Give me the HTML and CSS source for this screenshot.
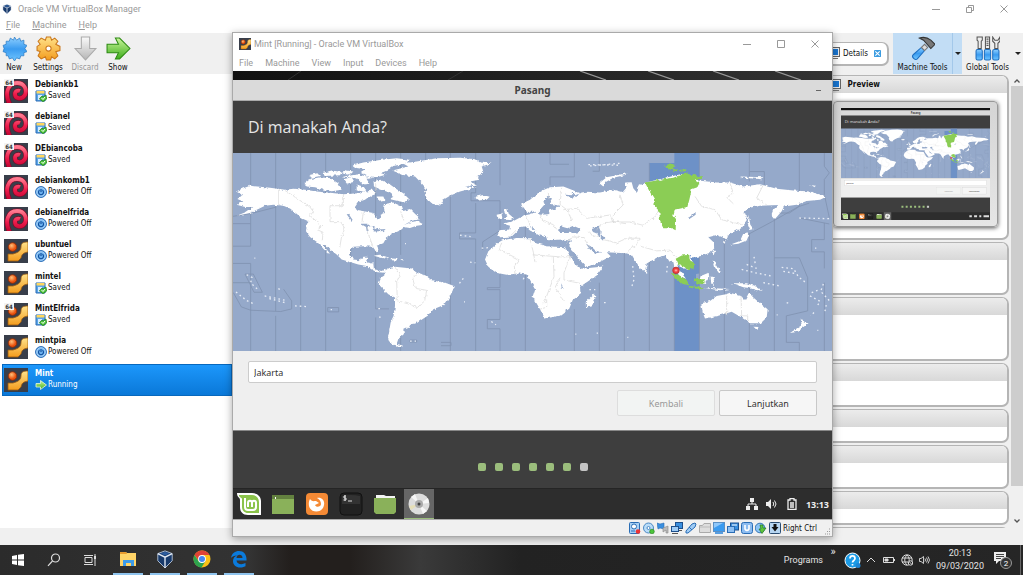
FILE: index.html
```html
<!DOCTYPE html>
<html lang="id">
<head>
<meta charset="utf-8">
<title>Oracle VM VirtualBox Manager</title>
<link rel="stylesheet" href="styles.css">
</head>
<body>
<svg class="defs" aria-hidden="true">
  <defs>
    <linearGradient id="red" x1="0" y1="0" x2="0" y2="1"><stop offset="0" stop-color="#ff7a90"/><stop offset=".5" stop-color="#ee1c4b"/><stop offset="1" stop-color="#b8002e"/></linearGradient>
    <linearGradient id="gold" x1="0" y1="0" x2="0" y2="1"><stop offset="0" stop-color="#ffe28a"/><stop offset="1" stop-color="#f39c1d"/></linearGradient>
    <linearGradient id="blue" x1="0" y1="0" x2="0" y2="1"><stop offset="0" stop-color="#8fd0ff"/><stop offset=".5" stop-color="#3a9bf0"/><stop offset="1" stop-color="#6fc6ff"/></linearGradient>
    <linearGradient id="green" x1="0" y1="0" x2="0" y2="1"><stop offset="0" stop-color="#c9f59a"/><stop offset="1" stop-color="#3fae1c"/></linearGradient>
    <linearGradient id="grey" x1="0" y1="0" x2="0" y2="1"><stop offset="0" stop-color="#fafafa"/><stop offset="1" stop-color="#b5b5b5"/></linearGradient>
    <radialGradient id="ball" cx=".4" cy=".35"><stop offset="0" stop-color="#ffc07a"/><stop offset="1" stop-color="#e8500c"/></radialGradient>
    <filter id="coast" x="0" y="0" width="1" height="1"><feTurbulence type="fractalNoise" baseFrequency=".09" numOctaves="3" seed="4"/><feDisplacementMap in="SourceGraphic" scale="10" xChannelSelector="R" yChannelSelector="G"/></filter>
  </defs>

  <symbol id="debian" viewBox="0 0 24 24">
    <rect width="24" height="24" fill="#383e4a"/>
    <path d="M6 26C0 14 4 4 13 4c8 0 10 7 8 12-3 5-10 4-10-1 0-3 3-4 5-3" fill="none" stroke="#7d0a26" stroke-width="5"/>
    <path d="M6 26C0 14 4 4 13 4c8 0 10 7 8 12-3 5-10 4-10-1 0-3 3-4 5-3" fill="none" stroke="url(#red)" stroke-width="3.800"/>
  </symbol>
  <symbol id="ubuntu" viewBox="0 0 24 24">
    <rect width="24" height="24" fill="#383e4a"/>
    <path d="M24 3c-5 0-7 1-7 5 0 3-2 5-5 6l-3 1H4v7h10l3-3c1-4 2-5 7-6z" fill="url(#gold)" stroke="#9c5a10" stroke-width=".8"/>
    <circle cx="8.500" cy="8" r="4.300" fill="url(#ball)" stroke="#8a2a05" stroke-width=".8"/>
  </symbol>
  <symbol id="saved" viewBox="0 0 12 12">
    <path d="M1 1h9v10H1z" fill="#5ba6e8" stroke="#2a6db5"/><path d="M1.500 1h8v2.500h-8z" fill="#ffd75e"/><path d="M3 5h4v5H3z" fill="#d9ecfd"/>
    <path d="M5 8l2-2 1 1 3-2 .7 4L8 11.700 4.500 9z" fill="#4cc53a" stroke="#217a1a" stroke-width=".7"/><path d="M6.500 8L8 9.500 10 7" stroke="#fff" fill="none" stroke-width="1"/>
  </symbol>
  <symbol id="off" viewBox="0 0 12 12">
    <circle cx="6" cy="6" r="5.400" fill="#6ab0ef" stroke="#2166b3"/><circle cx="6" cy="6" r="4.200" fill="none" stroke="#cfe7fc" stroke-width=".7"/>
    <path d="M4.500 4.200a2.500 2.500 0 1 0 3 0M6 3v3" fill="none" stroke="#0f4d9a" stroke-width="1.100"/>
  </symbol>
  <symbol id="run" viewBox="0 0 12 12"><path d="M1 4.500h4.500V1.500l6 4.500-6 4.500V8H1z" fill="url(#green)" stroke="#e4f7d8" stroke-width=".8"/></symbol>
  <symbol id="monitor" viewBox="0 0 12 12"><rect x=".5" y=".5" width="11" height="9" fill="#eee" stroke="#666"/><rect x="2" y="2" width="8" height="6" fill="#1976d2"/><path d="M2 11.500h8" stroke="#777"/></symbol>

  <symbol id="map" viewBox="9 9 1797 597" preserveAspectRatio="none">
    <rect x="0" y="0" width="1810" height="620" fill="#95a9ca"/>
    <path d="M1258 39h75V9h75v75l-6 20v-8l6 234v42l-10 2v18h10v214h-75V330l-75-230z" fill="#6d91c7"/>
    <g fill="none" stroke="#8092b0" stroke-width="2.500">
      <path d="M62 9v213M9 222h53v68H9M9 342h53v58H9M62 400v206M137 9v477M137 500v106M212 9v597M287 9v597M362 9v597M437 9v470h40M437 505v101M512 9v307M512 400v206M587 9v597M661 9v597M737 9v120h-14v24h87v90l-52 34v24M737 160v90h-48v18h48v338M810 9v97M810 290v125h-38v6h38v90h-38v28h38v67M886 9v597"/>
      <path d="M9 200l60-10 70-18M45 374h25l27 55H72zM10 430l24 43 28 10 90 4 33-8v-24l-24-35M293 475h33v13h-33zM633 580h30v10h-30M540 573h20v6h-20z"/>
      <path d="M960 9v34h57M1033 9v72h-73v25M1108 9v55h-20M1033 480v126M1108 400v206M1183 300v306M1258 39v60M1258 300v306M1333 375v231M1408 9v597M1483 260v346M1558 65v30M1558 9v56h45v40M1633 520v86M1558 250v356M1633 200v320M1708 9v160l-80 46-80 43M1633 190h45l30-20 30-10M1783 9v40l15 20-15 20v45l15 70M1708 205l90 18M1783 220v50h-38v37h38v50M1633 325h75l25 60v100l-64 15v80h39v26M1783 400v206"/>
    </g>
    <g fill="#fff" filter="url(#coast)">
      <path d="M18 125L38 116 60 108 90 111 120 114 165 120 190 117 225 120 260 125 300 129 340 133 385 130 400 124 414 128 425 116 436 133 418 140 405 150 385 157 375 172 380 181 402 185 430 190 440 205 453 208 452 195 465 190 462 175 465 163 490 158 515 170 520 184 540 178 558 195 573 208 545 213 522 226 545 217 562 214 582 225 560 228 540 235 520 232 505 245 485 253 468 267 460 281 440 289 447 305 440 308 428 292 400 290 370 292 360 300 360 315 370 330 390 332 400 322 412 322 408 338 430 343 432 360 455 365 468 358 462 370 440 368 425 360 410 350 385 345 360 338 335 330 320 315 300 300 285 286 278 285 300 313 290 309 275 292 262 278 240 262 228 245 230 225 235 215 215 206 200 192 180 176 160 168 130 165 105 168 85 178 60 190 20 198 50 186 70 172 45 172 20 165 40 155 22 148 38 136z"/>
      <path d="M430 95L450 90 475 100 500 118 520 130 537 148 525 158 500 153 478 148 492 140 478 128 450 118 432 110zM368 46L400 38 450 30 500 25 543 30 520 42 490 48 472 62 450 70 470 74 440 82 410 78 390 68 405 58 380 54zM224 100L240 88 270 82 300 85 325 100 335 120 305 124 280 120 255 112 230 110zM235 76L262 70 270 78 245 84zM275 70l30-8 30 4-5 10-45 2zM340 60l30 5-10 10-25-4zM340 88l25-6 8 14-22 6zM378 82l30 2 10 18-20 2zM380 104l18 6 12 16-30-4zM440 140l20 0 6 14-20 2zM338 80l44-6 50 10-30 4z"/>
      <path d="M487 62L535 50 518 40 560 35 620 25 690 23 738 28 750 38 785 40 755 50 760 65 740 80 748 90 720 95 738 104 705 110 740 112 690 125 660 138 640 150 630 167 607 162 590 146 584 130 592 120 575 100 555 80 520 75zM733 142L760 136 779 141 770 150 745 152z"/>
      <path d="M463 364L480 355 495 352 545 357 560 370 587 378 605 393 650 402 674 411 666 428 655 450 645 466 610 480 600 495 577 510 560 522 540 525 535 535 520 542 522 555 505 570 500 584 520 590 500 593 480 582 474 565 482 520 490 505 495 470 495 445 475 435 460 420 443 402 450 387 463 378zM428 318L450 316 478 325 465 328zM482 327l22 1-5 5-16-1zM512 329l10 0 0 3-9 0z"/>
      <path d="M765 330L775 305 803 280 817 272 860 265 900 266 920 282 950 290 1005 293 1020 320 1035 345 1055 358 1120 351 1100 378 1050 412 1052 436 1028 452 1018 478 990 500 945 508 930 480 908 442 915 420 902 398 890 375 865 372 830 376 798 370 775 352zM1067 458L1092 433 1099 440 1085 472 1068 475z"/>
      <path d="M805 242L838 240 840 228 820 222 852 213 880 198 900 194 918 188 930 195 960 193 955 182 975 178 990 168 960 172 935 190 920 190 905 182 898 190 880 180 874 163 900 150 930 125 960 112 1000 110 1052 130 1034 137 1008 135 1018 145 1035 142 1055 128 1070 126 1110 128 1150 120 1178 127 1190 112 1186 98 1205 97 1210 115 1222 130 1226 108 1248 98 1300 85 1355 72 1400 80 1405 92 1460 98 1500 98 1540 110 1590 103 1640 117 1690 122 1740 125 1790 140 1770 150 1730 154 1700 165 1662 170 1655 185 1635 208 1624 195 1630 180 1645 166 1590 168 1555 175 1540 190 1550 197 1550 215 1535 235 1512 248 1494 255 1490 270 1476 262 1460 256 1435 263 1450 277 1453 296 1440 310 1410 320 1390 325 1378 318 1392 345 1375 362 1350 352 1342 345 1345 358 1368 388 1348 380 1334 356 1330 338 1315 336 1305 318 1280 325 1250 342 1246 360 1235 363 1215 332 1205 316 1188 311 1130 308 1142 320 1095 345 1067 351 1052 335 1018 290 1022 274 1000 270 955 272 946 262 932 255 915 238 900 230 893 226 908 238 940 250 925 257 900 243 886 230 870 233 862 245 842 264 815 266 805 258z"/>
      <path d="M822 178l10 0 4 14 16 14-10 5-20-1 10-10-8-10zM800 195l14-3 3 12-15 4zM1108 100L1130 82 1190 70 1192 74 1150 84 1125 98 1120 110zM1530 80l70 2-5 6-55-4zM1740 106l18 2-6 4zM1556 195l5 30 10 14-10 2-8-20zM1540 252l10-4 6 10-6 15-25 10-25 3 30-12zM1480 270l6 10-6 3z"/>
      <path d="M1245 358l8 8-4 8-5-8zM1449 300l6 5-4 12-5-5zM1448 332l10 10 14 24-6 4-14-20zM1412 380l24-10 2 14-14 20-18-4zM1442 382l14 0-8 10 4 18-8-4zM1505 402l20 0 25 0 30 10 18 12-20-2-20-6-18-2-20-8zM1420 415l80 4-30 4z"/>
      <path d="M1414 462L1440 455 1460 440 1488 435 1500 430 1533 440 1545 452 1557 430 1570 445 1590 462 1613 480 1610 505 1592 522 1560 522 1535 505 1505 488 1465 500 1425 508 1418 490zM1570 533l16 1-6 8zM1712 508L1722 520 1736 522 1718 535 1705 548 1680 552 1700 538 1715 528z"/>
    </g>
    <g fill="none" stroke="#e8edf6" stroke-width="4" stroke-dasharray="5 9">
      <path d="M50 376l16 8-4 16 12 12 14 12M18 428l32 26 26 12M104 440l66 14M118 448l54 14M145 418l10 5M195 470l34 2M690 257l32 4M720 338l16 2M755 296l24-2M302 481h4M445 478l10 0M447 504l8 0M540 576l18 0M784 517l14 10M525 282h3M700 387l-14 18M702 458h3M73 326h3M880 390l2-6"/>
      <path d="M1075 44l96 2M1080 48l92-8M1208 350l4 40-6 20M1312 350l-2 20M1572 322l4 22M1655 354l36 4 14 24 20 16M1660 366l34 6M1600 400l50 10M1535 360l40 10 50 10M1708 205l90 2M1740 440l30 16-8 14M1780 404l-8 22 26 28M1745 430l26-10M1752 490l-10 10M1755 296h4M1670 460l10 4M1078 421h18M1122 460h12M1100 552h4M1036 555h3M1192 565h3M1640 497h3M1762 544h3M1785 486l4-20M1550 345l30 12"/>
    </g>
    <g fill="#95a9ca" filter="url(#coast)">
      <path d="M925 185L943 165 940 152 955 140 966 146 957 162 990 168 988 174 962 174 952 194 930 193zM985 240L992 230 1012 236 1030 228 1052 238 1048 248 1010 250 990 250zM1083 236L1105 228 1112 245 1110 258 1128 264 1118 273 1108 262 1100 250 1088 246zM1068 283L1082 290 1098 304 1115 308 1098 311 1080 300zM350 194l6-1 12 18-4 2zM392 222l20 0 10 8-10 2 4 14-6-2-2-12zM425 230l22 10 20-2-6 6-30 2zM1375 205l22-18 0 8-20 14zM993 405l8 14-6-2zM1025 128l12 6-10 4zM900 244l26 12 24 8-10 10-20-2-22-10z"/>
    </g>
    <g fill="none" stroke="#d4d4d4" stroke-width="2" filter="url(#coast)">
      <path d="M145 116v50M165 122l75 50 10 14-10 12 35 30-14 12 18 8-2 24M340 133v35h-40v48h32l12 20-10 30-6 34M400 188l-4 30M412 232l6 30 10 26M437 100v30M512 185l10 28M495 353l15 28-10 14 2 60 30 8 30 12 22-20 6-32-34-6-8-30 12-14M815 280l-8 20 60 30-14 20 2 26M900 268l10 40 5 30M908 316l80 6 40 0M970 322l2 60-30 80M930 480l20-6 0-24M1020 320l-18 50 0 22 48 10M990 385l-15 30 28 40M838 262l20-20M890 200l10 25M930 195l10 20 30 10 10 14M955 128l2 20M995 114l-5 50 25 20 10 30M1000 180l40-4 30 30 70-10 8 20 40 6M1170 135l10 30-30 30 0 22 50 0 40 10 40-30 10-30 10 0M1100 240l20-20 30-4M1120 270l40 10 30-14 40 0-10 20-30 20M1230 290l50 14 40-2 20 20M1395 140l20 30 40 10 20 30 60 15M1500 100l10 30-20 12 20 20M1600 105l-20 40 30 20M1490 435v60M1533 440l2 60h18v22M1010 280l15-18 35 2 20 30M1108 260l-20 0-10-14"/>
    </g>
    <g fill="#8bcd55" filter="url(#coast)">
      <path d="M1245 98L1300 88 1330 84 1355 74 1365 68 1380 74 1418 80 1412 86 1395 92 1408 100 1402 112 1385 118 1378 150 1372 172 1335 180 1330 198 1338 208 1337 242 1325 236 1300 236 1290 215 1288 185 1270 165 1272 148 1255 118zM1303 48l18-7 15 4-8 10 18 8-12 1-22-8zM1346 60l22-2 4 5-20 2zM1337 328L1355 318 1377 316 1380 332 1392 340 1392 354 1375 362 1362 352 1344 346zM1322 370L1345 376 1370 392 1378 408 1358 404 1335 386zM1376 410l44 4-2 6-40-5zM1392 384l16 6 14 0 2 12-20 2-12-10z"/>
    </g>
    <circle cx="1338" cy="363" r="10" fill="#ee3b3b" stroke="#a33" stroke-width="2"/><path d="M1334 360h8v6h-8z" fill="#ff9b9b"/>
  </symbol>

  <symbol id="mintlogo" viewBox="0 0 24 24"><path d="M0 1h15c6 0 9 4 9 8v14H11c-6 0-8-4-8-8V8C3 5 0 6 0 1z" fill="#fff"/><path d="M2 3h13c4 0 7 3 7 7v11H11c-4 0-6-3-6-6V7C5 5 2 6 2 3z" fill="#8bc34a"/><path d="M8 6v9c0 2 1 3 3 3h5c2 0 3-1 3-3v-4c0-3-4-3-4 0v4m0-4c0-3-4-3-4 0v4" fill="none" stroke="#fff" stroke-width="2"/></symbol>
  <symbol id="desk" viewBox="0 0 24 24"><path d="M1 3h22v19H1z" fill="#8ab15a"/><path d="M1 3h22v4H1z" fill="#63813f"/><path d="M4 5h1v2h-1z" fill="#fff"/></symbol>
  <symbol id="fox" viewBox="0 0 24 24"><rect x="1" y="1" width="22" height="22" rx="4" fill="#f58a35"/><path d="M5 7c2 3 4 2 6 2l3 2-4 2c1 3 6 2 6-1 0-3-2-5-4-6 5-1 8 3 7 7-1 8-13 9-15 1-.5-3 0-5 1-7z" fill="#fff"/></symbol>
  <symbol id="term" viewBox="0 0 24 24"><rect x="1" y="1" width="22" height="22" rx="4" fill="#222" stroke="#111"/><path d="M3 4q9-2 18 0v8H3z" fill="#333"/><path d="M7 4H5v2h2v2H4.500M6 3v6M9 9h4" stroke="#ddd" fill="none"/></symbol>
  <symbol id="files" viewBox="0 0 24 24"><path d="M3 3h8l2 1h9v5H3z" fill="#f4f4f4"/><path d="M1 6h22v14l-2 2H3l-2-2z" fill="#8ab15a"/></symbol>
  <symbol id="disc" viewBox="0 0 24 24"><circle cx="12" cy="12" r="10.500" fill="#ddd"/><path d="M12 12L4 5l4-3zM12 12l8 7-4 3zM12 12l9-6 1 5z" fill="#f7f7f7"/><path d="M12 12L2 14l2 4z" fill="#e6dfb8"/><circle cx="12" cy="12" r="4" fill="#aaa"/><circle cx="12" cy="12" r="1.500" fill="#444"/></symbol>
  <symbol id="vbox" viewBox="0 0 20 20"><path d="M10 1l8 3v8l-8 8-8-8V4z" fill="#183a6b" stroke="#b9c7da"/><path d="M2 4l8 4 8-4M10 8v12" stroke="#e4ebf5" stroke-width="1.500" fill="none"/><path d="M5 4l5-2 5 2-5 2z" fill="#2c5c9e"/></symbol>
</svg>

<div class="desktop">
  <main class="manager">
    <header class="titlebar">
      <svg class="appicon"><use href="#vbox"/></svg>
      <h1 class="title">Oracle VM VirtualBox Manager</h1>
      <div class="winbtns">
        <button aria-label="Minimize"><svg viewBox="0 0 10 10"><path d="M1 5.500h8"/></svg></button>
        <button aria-label="Restore"><svg viewBox="0 0 10 10"><path d="M1.500 3.500h5v5h-5zM3.500 3V1.500h5v5H7"/></svg></button>
        <button aria-label="Close"><svg viewBox="0 0 10 10"><path d="M1.500 1.500l7 7m0-7l-7 7"/></svg></button>
      </div>
    </header>
    <nav class="menubar"><button><u>F</u>ile</button><button><u>M</u>achine</button><button><u>H</u>elp</button></nav>

    <div class="toolbar">
      <button class="tool new"><svg viewBox="0 0 24 24"><path d="M12 1l2 3 3-2 1 3 3-1v4l3 1-2 3 2 3-3 1v3h-3l-1 3-3-1-2 3-2-3-3 1-1-3H4v-3l-3-1 1-3-1-3 3-1V5l3 0 1-3 3 2z" fill="url(#blue)" stroke="#2a79c4" stroke-width=".7"/></svg>New</button>
      <button class="tool settings"><svg viewBox="0 0 24 24"><path d="M10 1h4l1 3 3-2 3 3-2 3 4 2v4l-4 1 2 4-3 3-3-2-1 3h-4l-1-3-4 2-3-3 2-4-3-1v-4l3-2-2-3 3-3 4 2z" fill="url(#gold)" stroke="#c9761a"/><circle cx="12" cy="12" r="2.500" fill="#fff" stroke="#c9761a"/></svg>Settings</button>
      <button class="tool discard" disabled><svg viewBox="0 0 24 24"><path d="M8 1h8v11h6L12 23 2 12h6z" fill="url(#grey)" stroke="#aaa"/></svg>Discard</button>
      <button class="tool show"><svg viewBox="0 0 24 24"><path d="M1 8h11l-3-6h4l10 10-10 10H9l3-6H1z" fill="url(#green)" stroke="#2c8a12"/></svg>Show</button>
      <div class="toolgap"></div>
      <button class="tab"><svg class="tiny"><use href="#monitor"/></svg>Details<svg class="tabx" viewBox="0 0 8 8"><rect width="8" height="8" rx="1" fill="#3a9be0"/><path d="M1.500 1.500l5 5m0-5l-5 5" stroke="#fff" stroke-width="1.200"/></svg></button>
      <button class="tool machine"><svg viewBox="0 0 24 24"><path d="M3 18l8-7 3 3-7 8c-2 2-6-2-4-4z" fill="url(#blue)" stroke="#1f6fc0"/><path d="M11 11l3-3 3 3-3 3z" fill="#ddd" stroke="#777"/><path d="M9 2q6-2 11 2l4 4-4 4-7-8z" fill="#777" stroke="#333"/></svg>Machine Tools</button>
      <button class="drop hot" aria-label="Machine tools menu"><i></i></button>
      <button class="tool global"><svg viewBox="0 0 24 24"><path d="M2 1h5v3l-1 1v7H3V5L2 4zM10 1h4v11h-4zM17 1v4l2 2v5h3V7l2-2V1l-2 3h-3z" fill="#eee" stroke="#555"/><path d="M11 3h2M11 5h2M11 7h2M11 9h2" stroke="#555"/><rect x="1" y="13" width="6" height="10" rx="1.500" fill="url(#blue)" stroke="#1f6fc0"/><rect x="9" y="13" width="6" height="10" rx="1.500" fill="url(#blue)" stroke="#1f6fc0"/><rect x="17" y="13" width="6" height="10" rx="1.500" fill="url(#blue)" stroke="#1f6fc0"/></svg>Global Tools</button>
      <button class="drop" aria-label="Global tools menu"><i></i></button>
    </div>

    <div class="content">
      <ul class="vms">
        <li class="vm"><span class="os b64"><svg><use href="#debian"/></svg></span><div><b>Debiankb1</b><span><svg><use href="#saved"/></svg>Saved</span></div></li>
        <li class="vm"><span class="os b64"><svg><use href="#debian"/></svg></span><div><b>debianel</b><span><svg><use href="#saved"/></svg>Saved</span></div></li>
        <li class="vm"><span class="os b64"><svg><use href="#debian"/></svg></span><div><b>DEbiancoba</b><span><svg><use href="#saved"/></svg>Saved</span></div></li>
        <li class="vm"><span class="os"><svg><use href="#debian"/></svg></span><div><b>debiankomb1</b><span><svg><use href="#off"/></svg>Powered Off</span></div></li>
        <li class="vm"><span class="os"><svg><use href="#debian"/></svg></span><div><b>debianelfrida</b><span><svg><use href="#off"/></svg>Powered Off</span></div></li>
        <li class="vm"><span class="os"><svg><use href="#ubuntu"/></svg></span><div><b>ubuntuel</b><span><svg><use href="#off"/></svg>Powered Off</span></div></li>
        <li class="vm"><span class="os"><svg><use href="#ubuntu"/></svg></span><div><b>mintel</b><span><svg><use href="#saved"/></svg>Saved</span></div></li>
        <li class="vm"><span class="os b64"><svg><use href="#ubuntu"/></svg></span><div><b>MintElfrida</b><span><svg><use href="#saved"/></svg>Saved</span></div></li>
        <li class="vm"><span class="os"><svg><use href="#ubuntu"/></svg></span><div><b>mintpia</b><span><svg><use href="#off"/></svg>Powered Off</span></div></li>
        <li class="vm selected"><span class="os"><svg><use href="#ubuntu"/></svg></span><div><b>Mint</b><span><svg><use href="#run"/></svg>Running</span></div></li>
      </ul>
      <div class="details">
        <section class="panel preview">
          <h2><svg class="tiny"><use href="#monitor"/></svg>Preview</h2>
          <div class="screen">
            <svg viewBox="0 0 599 449" preserveAspectRatio="none">
              <rect width="599" height="449" fill="#3e3e3e"/><rect width="599" height="9" fill="#111"/><rect y="9" width="599" height="21" fill="#dadada"/>
              <text x="300" y="24" class="pv-title">Pasang</text><text x="15" y="62" class="pv-head">Di manakah Anda?</text>
              <use href="#map" x="0" y="82" width="599" height="199"/>
              <rect y="281" width="599" height="78" fill="#efefef"/><rect x="15" y="290" width="569" height="21" fill="#fff" stroke="#ccc"/>
              <rect x="384" y="320" width="97" height="25" fill="#f3f4f3" stroke="#ddd"/><rect x="487" y="320" width="97" height="25" fill="#f6f6f6" stroke="#ccc"/>
              <text x="21" y="305" class="pv-text">Jakarta</text><text x="433" y="337" class="pv-text mid dim">Kembali</text><text x="535" y="337" class="pv-text mid">Lanjutkan</text>
              <path d="M243 396h104" stroke="#9cbf7d" stroke-width="8" stroke-dasharray="8 9"/><rect x="346" y="392" width="8" height="8" fill="#ccc"/>
              <rect y="418" width="599" height="31" fill="#2d2d2d"/>
              <use href="#mintlogo" x="4" y="422" width="24" height="24"/><use href="#desk" x="36" y="422" width="24" height="24"/><use href="#fox" x="72" y="422" width="24" height="24"/><use href="#term" x="106" y="422" width="24" height="24"/><use href="#files" x="141" y="422" width="24" height="24"/><rect x="172" y="418" width="30" height="31" fill="#666"/><use href="#disc" x="175" y="422" width="24" height="24"/>
              <path d="M516 434h10M535 434h12M556 434h8M573 434h22" stroke="#ddd" stroke-width="8"/>
            </svg>
          </div>
        </section>
        <section class="panel h52"><h2></h2></section>
        <section class="panel h62"><h2></h2></section>
        <section class="panel h43"><h2></h2></section>
        <section class="panel h33"><h2></h2></section>
        <section class="panel h43"><h2></h2></section>
        <section class="panel h33"><h2></h2></section>
        <section class="panel h33"><h2></h2></section>
      </div>
      <div class="scroll">
        <svg viewBox="0 0 8 8"><path d="M1.500 5.500L4 3l2.500 2.500"/></svg><div class="thumb"></div><svg viewBox="0 0 8 8"><path d="M1.500 2.500L4 5l2.500-2.500"/></svg>
      </div>
    </div>
    <footer class="status"></footer>
  </main>

  <section class="vmwin" aria-label="Mint">
    <header class="vmtitle">
      <svg class="vmicon"><use href="#ubuntu"/></svg>
      <span class="title">Mint [Running] - Oracle VM VirtualBox</span>
      <div class="winbtns">
        <button aria-label="Minimize"><svg viewBox="0 0 10 10"><path d="M1 5.500h8"/></svg></button>
        <button aria-label="Maximize"><svg viewBox="0 0 10 10"><path d="M1.500 1.500h7v7h-7z"/></svg></button>
        <button aria-label="Close"><svg viewBox="0 0 10 10"><path d="M1.500 1.500l7 7m0-7l-7 7"/></svg></button>
      </div>
    </header>
    <nav class="menubar"><button>File</button><button>Machine</button><button>View</button><button>Input</button><button>Devices</button><button>Help</button></nav>
    <div class="guest">
      <div class="wallpaper"><svg viewBox="0 0 599 9" preserveAspectRatio="none"><path d="M55 9L68 0M215 9L230 0" stroke="#333" fill="none"/><path d="M347 0l26 9M415 0l26 9M480 0l26 9M542 0l26 9" stroke="#999" stroke-width="1.300" fill="none"/></svg></div>
      <div class="gtitle">Pasang<button aria-label="Minimize"></button></div>
      <div class="ghead">Di manakah Anda?</div>
      <svg class="worldmap" viewBox="0 0 599 199" preserveAspectRatio="none" role="img" aria-label="Peta zona waktu"><use href="#map" width="599" height="199"/></svg>
      <form class="gform">
        <input type="text" value="Jakarta" aria-label="Lokasi">
        <div class="gbtns"><button type="button" disabled>Kembali</button><button type="button">Lanjutkan</button></div>
      </form>
      <div class="gdots"><i></i><i></i><i></i><i></i><i></i><i></i><i class="todo"></i></div>
      <div class="gpanel">
        <button aria-label="Menu"><svg><use href="#mintlogo"/></svg></button>
        <button aria-label="Desktop"><svg><use href="#desk"/></svg></button>
        <button aria-label="Firefox"><svg><use href="#fox"/></svg></button>
        <button aria-label="Terminal"><svg><use href="#term"/></svg></button>
        <button aria-label="Files"><svg><use href="#files"/></svg></button>
        <button class="active" aria-label="Installer"><svg><use href="#disc"/></svg></button>
        <div class="gtray">
          <svg viewBox="0 0 12 12"><path d="M4 0h4v4H4zM0 8h4v4H0zM8 8h4v4H8z" fill="#eee"/><path d="M6 4v2M2 8V6h8v2" stroke="#eee" fill="none"/></svg>
          <svg viewBox="0 0 12 12"><path d="M0 4h2l3-3v10L2 8H0z" fill="#eee"/><path d="M7 4q1.500 2 0 4M8.500 2.500q3 3.500 0 7" stroke="#eee" fill="none"/></svg>
          <svg viewBox="0 0 12 12"><path d="M2 2h2V.5h4V2h2v9.500H2zM4 5h4M4 7h4M4 9h4" stroke="#eee" stroke-width="1.300" fill="none"/></svg>
          <span>13:13</span>
        </div>
      </div>
    </div>
    <footer class="vmstatus">
      <svg viewBox="0 0 12 12"><rect x=".5" y=".5" width="10" height="11" rx="1" fill="#a8d0f5" stroke="#2a6db5"/><circle cx="5" cy="4.500" r="2.500" fill="#fff" stroke="#2a6db5"/><path d="M2 9h4" stroke="#2a6db5"/><circle cx="9" cy="9.500" r="2.300" fill="#e33"/></svg>
      <svg viewBox="0 0 12 12"><circle cx="5.500" cy="6" r="5" fill="#b9dcf8" stroke="#4a88c4"/><circle cx="5.500" cy="6" r="1.500" fill="#fff" stroke="#4a88c4"/><circle cx="9" cy="9.500" r="2.300" fill="#4cc53a" stroke="#217a1a" stroke-width=".6"/></svg>
      <svg viewBox="0 0 12 12"><path d="M0 1l3 1 4-1v6L3 6 1 7z" fill="#3a8fdf" stroke="#2a6db5" stroke-width=".6"/><path d="M6 6l5-2v7H9V8L6 10z" fill="#bbb" stroke="#888" stroke-width=".6"/></svg>
      <svg viewBox="0 0 12 12"><rect x="4.500" y=".5" width="7" height="6" fill="#3a8fdf" stroke="#1d4f8c"/><rect x=".5" y="4.500" width="7" height="5" fill="#9ecbf5" stroke="#1d4f8c"/><path d="M1 11.500h6M8 8.500h3" stroke="#555"/></svg>
      <svg viewBox="0 0 12 12"><path d="M1 9l6-7 3-1 1 1-1 3-7 6H1z" fill="#9ecbf5" stroke="#2a6db5"/><path d="M4 5l3 3" stroke="#2a6db5"/></svg>
      <svg viewBox="0 0 12 12"><path d="M.5 3.500h3l1.500-2h6.500v9H.5z" fill="#ddd" stroke="#aaa"/><path d="M1 5h10" stroke="#bbb"/></svg>
      <svg viewBox="0 0 12 12"><rect x=".5" y=".5" width="11" height="9" fill="#3a9bf0" stroke="#5a8fc4"/><path d="M1 6l9-5H1z" fill="#8fc8fa"/><path d="M2 11h8" stroke="#579de0" stroke-width="2"/></svg>
      <svg viewBox="0 0 12 12"><rect x="3.500" y="1" width="8" height="7" fill="#3a8fdf" stroke="#1d4f8c"/><rect x=".5" y="4.500" width="7" height="6" fill="#8fc0f2" stroke="#2a6db5"/><path d="M5 3h5" stroke="#fff"/></svg>
      <svg viewBox="0 0 12 12"><rect x=".5" y=".5" width="11" height="11" rx="2" fill="#8cbcf0" stroke="#2a6db5"/><path d="M4 3v4q2 3 4 0V3" fill="none" stroke="#fff" stroke-width="1.600"/></svg>
      <svg viewBox="0 0 12 12"><circle cx="5" cy="6" r="4.800" fill="#8cc4f5" stroke="#3a78b5"/><path d="M5 3h3v3h3l-4 5.500L4 7h2z" fill="#5fc43d" stroke="#217a1a" stroke-width=".7"/></svg>
      <svg viewBox="0 0 12 12"><rect x=".5" y=".5" width="11" height="11" rx="1" fill="#b7d6f2" stroke="#2b4d72"/><path d="M4.500 2h3v3h2L6 9.500 2.500 5h2z" fill="#111"/></svg>
      <span>Right Ctrl</span>
      <svg class="grip" viewBox="0 0 8 8"><path d="M6 1h1M4 3.500h1M6 3.500h1M2 6h1M4 6h1M6 6h1" stroke="#999"/></svg>
    </footer>
  </section>
</div>

<footer class="taskbar">
  <button class="sys" aria-label="Start"><svg viewBox="0 0 14 14"><path d="M1 3l5-1v4.500H1zM7 1.800L13 1v5.500H7zM1 7.500h5V12l-5-1zM7 7.500h6V13l-6-.8z" fill="#fff"/></svg></button>
  <button class="sys" aria-label="Search"><svg viewBox="0 0 14 14"><circle cx="8.500" cy="5" r="4" fill="none" stroke="#ddd" stroke-width="1.200"/><path d="M5.500 8L1 12.800" stroke="#ddd" stroke-width="1.200"/></svg></button>
  <button class="sys" aria-label="Task View"><svg viewBox="0 0 14 14"><path d="M2 4.500h7v5H2zM1 2.500h9M1 11.500h9M12 1v2M12 6v7" fill="none" stroke="#ddd"/><path d="M11 3h2v3h-2z" fill="#ddd"/></svg></button>
  <div class="apps">
    <button aria-label="File Explorer"><svg viewBox="0 0 18 18"><path d="M1 2h6l1 1h9v13H1z" fill="#ffd467"/><path d="M1 2h6l1 2H1z" fill="#e89b2c"/><path d="M4 16v-6h11v6h-3v-3H7v3z" fill="#3d9be9"/></svg></button>
    <button aria-label="VirtualBox"><svg><use href="#vbox"/></svg></button>
    <button aria-label="Chrome"><svg viewBox="0 0 18 18"><circle cx="9" cy="9" r="8.500" fill="#fbc116"/><path d="M1.500 5A8.500 8.500 0 0 1 16.500 5H9L6 11z" fill="#e04336"/><path d="M1.500 5A8.500 8.500 0 0 0 8.500 17.500l4-6.500L9 13 5.500 11z" fill="#2da44e"/><circle cx="9" cy="9" r="3.900" fill="#fff"/><circle cx="9" cy="9" r="3" fill="#4688f1"/></svg></button>
    <button aria-label="Edge"><svg viewBox="0 0 18 18"><path d="M1 8C2 3 5 1 9 1c5 0 8 4 7.500 9.500H6.500c.5 4 5.500 4.500 9 2.500v3.200C9 19.500 3 16.500 3 11c0-3 2-5 4-5.500C4 5.500 2 6.500 1 8zm5.500 0h6C12.500 3.500 6.500 4 6.500 8z" fill="#0b7bdc"/></svg></button>
  </div>
  <div class="fill"></div>
  <span class="programs">Programs</span><span class="more">»</span>
  <button class="help" aria-label="Help"><svg viewBox="0 0 17 17"><circle cx="8.500" cy="8.500" r="7.500" fill="#1c9be6" stroke="#fff"/><path d="M6 6.500c0-3.500 5-3.500 5 0 0 2-2.500 2-2.500 4M8.500 12v1.500" fill="none" stroke="#fff" stroke-width="1.700"/><circle cx="14" cy="13.500" r="2.500" fill="#1c86d6"/></svg></button>
  <button class="ti" aria-label="Show hidden icons"><svg viewBox="0 0 12 12"><path d="M2 8l4-4 4 4"/></svg></button>
  <button class="ti" aria-label="Battery"><svg viewBox="0 0 12 12"><path d="M.5 3.500h10v5H.5zM11.500 5v2"/><path d="M2 5h3v2H2z" fill="#ddd"/></svg></button>
  <button class="ti" aria-label="Network"><svg viewBox="0 0 12 12"><circle cx="6" cy="6" r="5.200"/><path d="M1 4h10M1 8h6M6 1c-3 3-3 7 0 10M6 1c2 2 2.500 4 2 6"/><circle cx="9.500" cy="9" r="2.200" fill="#222"/><path d="M8 7.500l3 3"/></svg></button>
  <button class="ti" aria-label="Volume"><svg viewBox="0 0 12 12"><path d="M.5 4.500H2l2.500-2v7L2 7.500H.5zM6 4.500q1 1.500 0 3M7.500 3.500q2 2.500 0 5M9 2.500q3 3.500 0 7" stroke-width=".9"/></svg></button>
  <time class="clock">20:13<br>09/03/2020</time>
  <button class="note" aria-label="Notifications"><svg viewBox="0 0 20 20"><path d="M1 2h12v9H6l-3 3v-3H1z" fill="#eee"/><path d="M3 4.500h8M3 6.500h8M3 8.500h5" stroke="#444"/><circle cx="13" cy="13" r="5.500" fill="#333" stroke="#999"/><text x="13" y="16">2</text></svg></button>
  <button class="peek" aria-label="Show desktop"></button>
</footer>
</body>
</html>
```

FILE: styles.css
```css
* { box-sizing: border-box; }
body { margin: 0; height: 100vh; display: flex; flex-direction: column; font-family: "DejaVu Sans Condensed", "DejaVu Sans", sans-serif; font-size: 8px; color: #111; overflow: hidden; }
button { border: 0; padding: 0; background: none; font: inherit; color: inherit; display: flex; align-items: center; justify-content: center; }
svg { display: block; }
.defs { position: absolute; width: 0; height: 0; }
.desktop { flex: 1; min-height: 0; position: relative; display: flex; }

.manager { flex: 1; display: flex; flex-direction: column; background: #fff; min-width: 0; min-height: 0; }
.titlebar { display: flex; align-items: center; height: 17px; padding-left: 2px; }
.appicon { width: 10px; height: 10px; }
.title { flex: 1; margin: 0 0 0 6px; font: 9px Roboto, sans-serif; color: #999; }
.winbtns { display: flex; color: #999; }
.winbtns button { width: 34px; height: 16px; }
.winbtns svg { width: 10px; height: 10px; fill: none; stroke: #999; }
.titlebar .winbtns { padding-right: 2px; }
.menubar { display: flex; align-items: center; height: 16px; padding-left: 6px; gap: 12px; font: 9px Roboto, sans-serif; color: #999; }

.toolbar { display: flex; height: 41px; background: #f0f0f0; }
.tool { flex-direction: column; justify-content: flex-start; gap: 2px; padding-top: 3px; line-height: 10px; white-space: nowrap; }
.tool svg { width: 25px; height: 25px; }
.new { width: 28px; }
.settings { width: 40px; }
.discard { width: 34px; color: #999; }
.show { width: 32px; }
.toolgap { flex: 1; }
.tab { align-self: center; height: 24px; border: 1px solid #b5b5b5; border-width: 1px 2px 2px 1px; border-radius: 7px; background: #fff; padding: 0 6px 0 8px; gap: 3px; margin-right: 4px; }
.tiny { width: 12px; height: 12px; }
.tabx { width: 7px; height: 7px; margin-left: 3px; }
.machine { width: 59px; background: #c2ddf5; }
.drop { width: 10px; }
.drop.hot { background: #c2ddf5; border-left: 1px solid #a3c8ea; }
.drop i { border: 3px solid transparent; border-top-color: #222; border-bottom: 0; }
.global { width: 51px; }

.content { flex: 1; display: flex; min-height: 0; background: #f0f0f0; }
.vms { width: 232px; margin: 0; padding: 1px 0 0 2px; list-style: none; background: #fff; }
.vm { height: 32px; display: flex; align-items: center; gap: 7px; padding-left: 2px; }
.vm b, .vm span { display: flex; align-items: center; gap: 1px; line-height: 10px; }
.vm svg { width: 12px; height: 12px; }
.vm .os { position: relative; }
.vm .os svg { width: 24px; height: 24px; }
.b64::before { content: "64"; position: absolute; left: 0; top: 0; width: 10px; height: 7px; background: #f4f4f4; color: #333; font-size: 6px; font-weight: bold; line-height: 7px; text-align: center; }
.selected { margin-top: 1px; background: linear-gradient(#1c97fb, #0a78d8); color: #fff; border: 1px solid #0868bd; padding-left: 1px; }

.details { flex: 1; display: flex; flex-direction: column; gap: 2px; padding: 1px 2px 0 0; overflow: hidden; }
.panel { flex: none; border: 1px solid #b5b5b5; border-width: 1px 2px 2px 1px; border-radius: 7px; background: #fff; overflow: hidden; }
.panel h2 { margin: 0; height: 17px; display: flex; align-items: center; justify-content: flex-end; gap: 7px; background: linear-gradient(#ececec, #d8d8d8); font-size: 8px; }
.preview { height: 165px; }
.preview h2 { padding-right: 127px; }
.screen { width: 165px; margin: 8px 9px 0 auto; padding: 6px 7px; border: 1px solid #999; border-radius: 4px; background: linear-gradient(#d5d5d5, #e6e6e6); box-shadow: 0 1px 4px #555; }
.screen svg { width: 100%; height: 112px; }
.pv-title { font: bold 11px "Noto Sans", sans-serif; text-anchor: middle; fill: #444; }
.pv-head { font: 16px "Noto Sans", sans-serif; fill: #ddd; }
.pv-text { font: 9px "Noto Sans", sans-serif; fill: #333; }
.mid { text-anchor: middle; }
.dim { fill: #999; }
.h52 { height: 53px; }
.h62 { height: 64px; }
.h43 { height: 44px; }
.h33 { height: 34px; }
.scroll { width: 12px; display: flex; flex-direction: column; align-items: center; padding: 2px 0; }
.scroll svg { width: 8px; height: 10px; fill: none; stroke: #555; stroke-width: 1.300; }
.thumb { flex: 1; width: 100%; background: #cdcdcd; margin-bottom: 30px; }
.status { height: 17px; background: #f0f0f0; }

.vmwin { position: absolute; left: 232px; top: 32px; right: 190px; bottom: 8px; display: flex; flex-direction: column; background: #fff; border: 1px solid #aaa; box-shadow: 0 2px 8px rgba(0, 0, 0, .35); }
.vmtitle { display: flex; align-items: center; height: 22px; padding-left: 6px; }
.vmicon { width: 12px; height: 12px; }
.vmtitle .title { margin-left: 3px; }
.guest { flex: 1; display: flex; flex-direction: column; min-height: 0; background: #3e3e3e; font-family: "Noto Sans", sans-serif; }
.wallpaper { height: 9px; background: linear-gradient(90deg, #111, #333); }
.wallpaper svg { width: 100%; height: 9px; }
.gtitle { height: 21px; display: flex; align-items: center; justify-content: center; position: relative; background: #dadada; color: #444; font-weight: bold; font-size: 10px; border-bottom: 1px solid #aaa; }
.gtitle button { position: absolute; right: 11px; width: 5px; height: 1px; background: #666; }
.ghead { height: 52px; display: flex; align-items: center; padding-left: 15px; color: #e6e6e6; font: 16px "Open Sans", sans-serif; }
.worldmap { width: 100%; flex: 1; min-height: 0; }
.gform { margin: 0; height: 79px; padding: 10px 15px; background: #efefef; display: flex; flex-direction: column; gap: 7px; }
.gform input { width: 100%; height: 22px; border: 1px solid #ccc; border-radius: 2px; padding: 0 5px; font: 9px "Noto Sans", sans-serif; color: #333; background: #fff; }
.gbtns { display: flex; justify-content: flex-end; gap: 4px; }
.gbtns button { width: 98px; height: 26px; border: 1px solid #c8c8c8; border-radius: 2px; background: #f6f6f6; color: #333; font-size: 9px; }
.gbtns button:disabled { color: #999; border-color: #ddd; background: #f2f4f3; }
.gdots { height: 58px; padding-top: 14px; display: flex; align-items: center; justify-content: center; gap: 9px; border-top: 1px solid #888; }
.gdots i { width: 8px; height: 8px; border-radius: 2px; background: #9bbd7c; }
.gdots .todo { background: #c4c4c4; }
.gpanel { height: 31px; display: flex; background: #2d2d2d; border-top: 1px solid #252525; gap: 4px; padding-left: 1px; }
.gpanel button { width: 30px; }
.gpanel button svg { width: 24px; height: 24px; }
.gpanel .active { background: #666; border-bottom: 1px solid #9bbd7c; }
.gtray { margin-left: auto; display: flex; align-items: center; gap: 8px; padding-right: 3px; color: #eee; font-weight: bold; font-size: 9px; }
.gtray svg { width: 12px; height: 12px; }
.vmstatus { height: 17px; display: flex; align-items: center; justify-content: flex-end; gap: 2px; background: #f0f0f0; padding-right: 1px; border-top: 1px solid #aaa; }
.vmstatus svg { width: 12px; height: 12px; }
.vmstatus span { font-size: 8px; }
.vmstatus .grip { width: 8px; height: 8px; margin-left: 4px; align-self: flex-end; }

.taskbar { height: 30px; display: flex; align-items: center; color: #e4e4e4; font: 9px Roboto, sans-serif; background: linear-gradient(90deg, #2b2b2b 0, #333 250px, #231f1d 290px, #231f1d 350px, #3a3a3a 420px, #222 520px, #262626); }
.taskbar button { height: 30px; }
.sys { width: 36px; }
.sys svg { width: 14px; height: 14px; }
.apps { display: flex; gap: 7px; margin-left: 5px; }
.apps button { width: 30px; border-bottom: 2px solid #8fc4ee; }
.apps svg { width: 18px; height: 18px; }
.fill { flex: 1; }
.more { width: 20px; text-align: center; align-self: flex-start; font-size: 11px; line-height: 14px; }
.help { width: 19px; }
.help svg { width: 17px; height: 17px; }
.ti { width: 18px; }
.ti svg { width: 12px; height: 12px; fill: none; stroke: #ddd; }
.clock { width: 52px; text-align: center; line-height: 13px; }
.note { width: 34px; }
.note svg { width: 20px; height: 20px; }
.note text { font: 8px Roboto, sans-serif; fill: #fff; text-anchor: middle; }
.peek { width: 3px; border-left: 1px solid #666; }
```
